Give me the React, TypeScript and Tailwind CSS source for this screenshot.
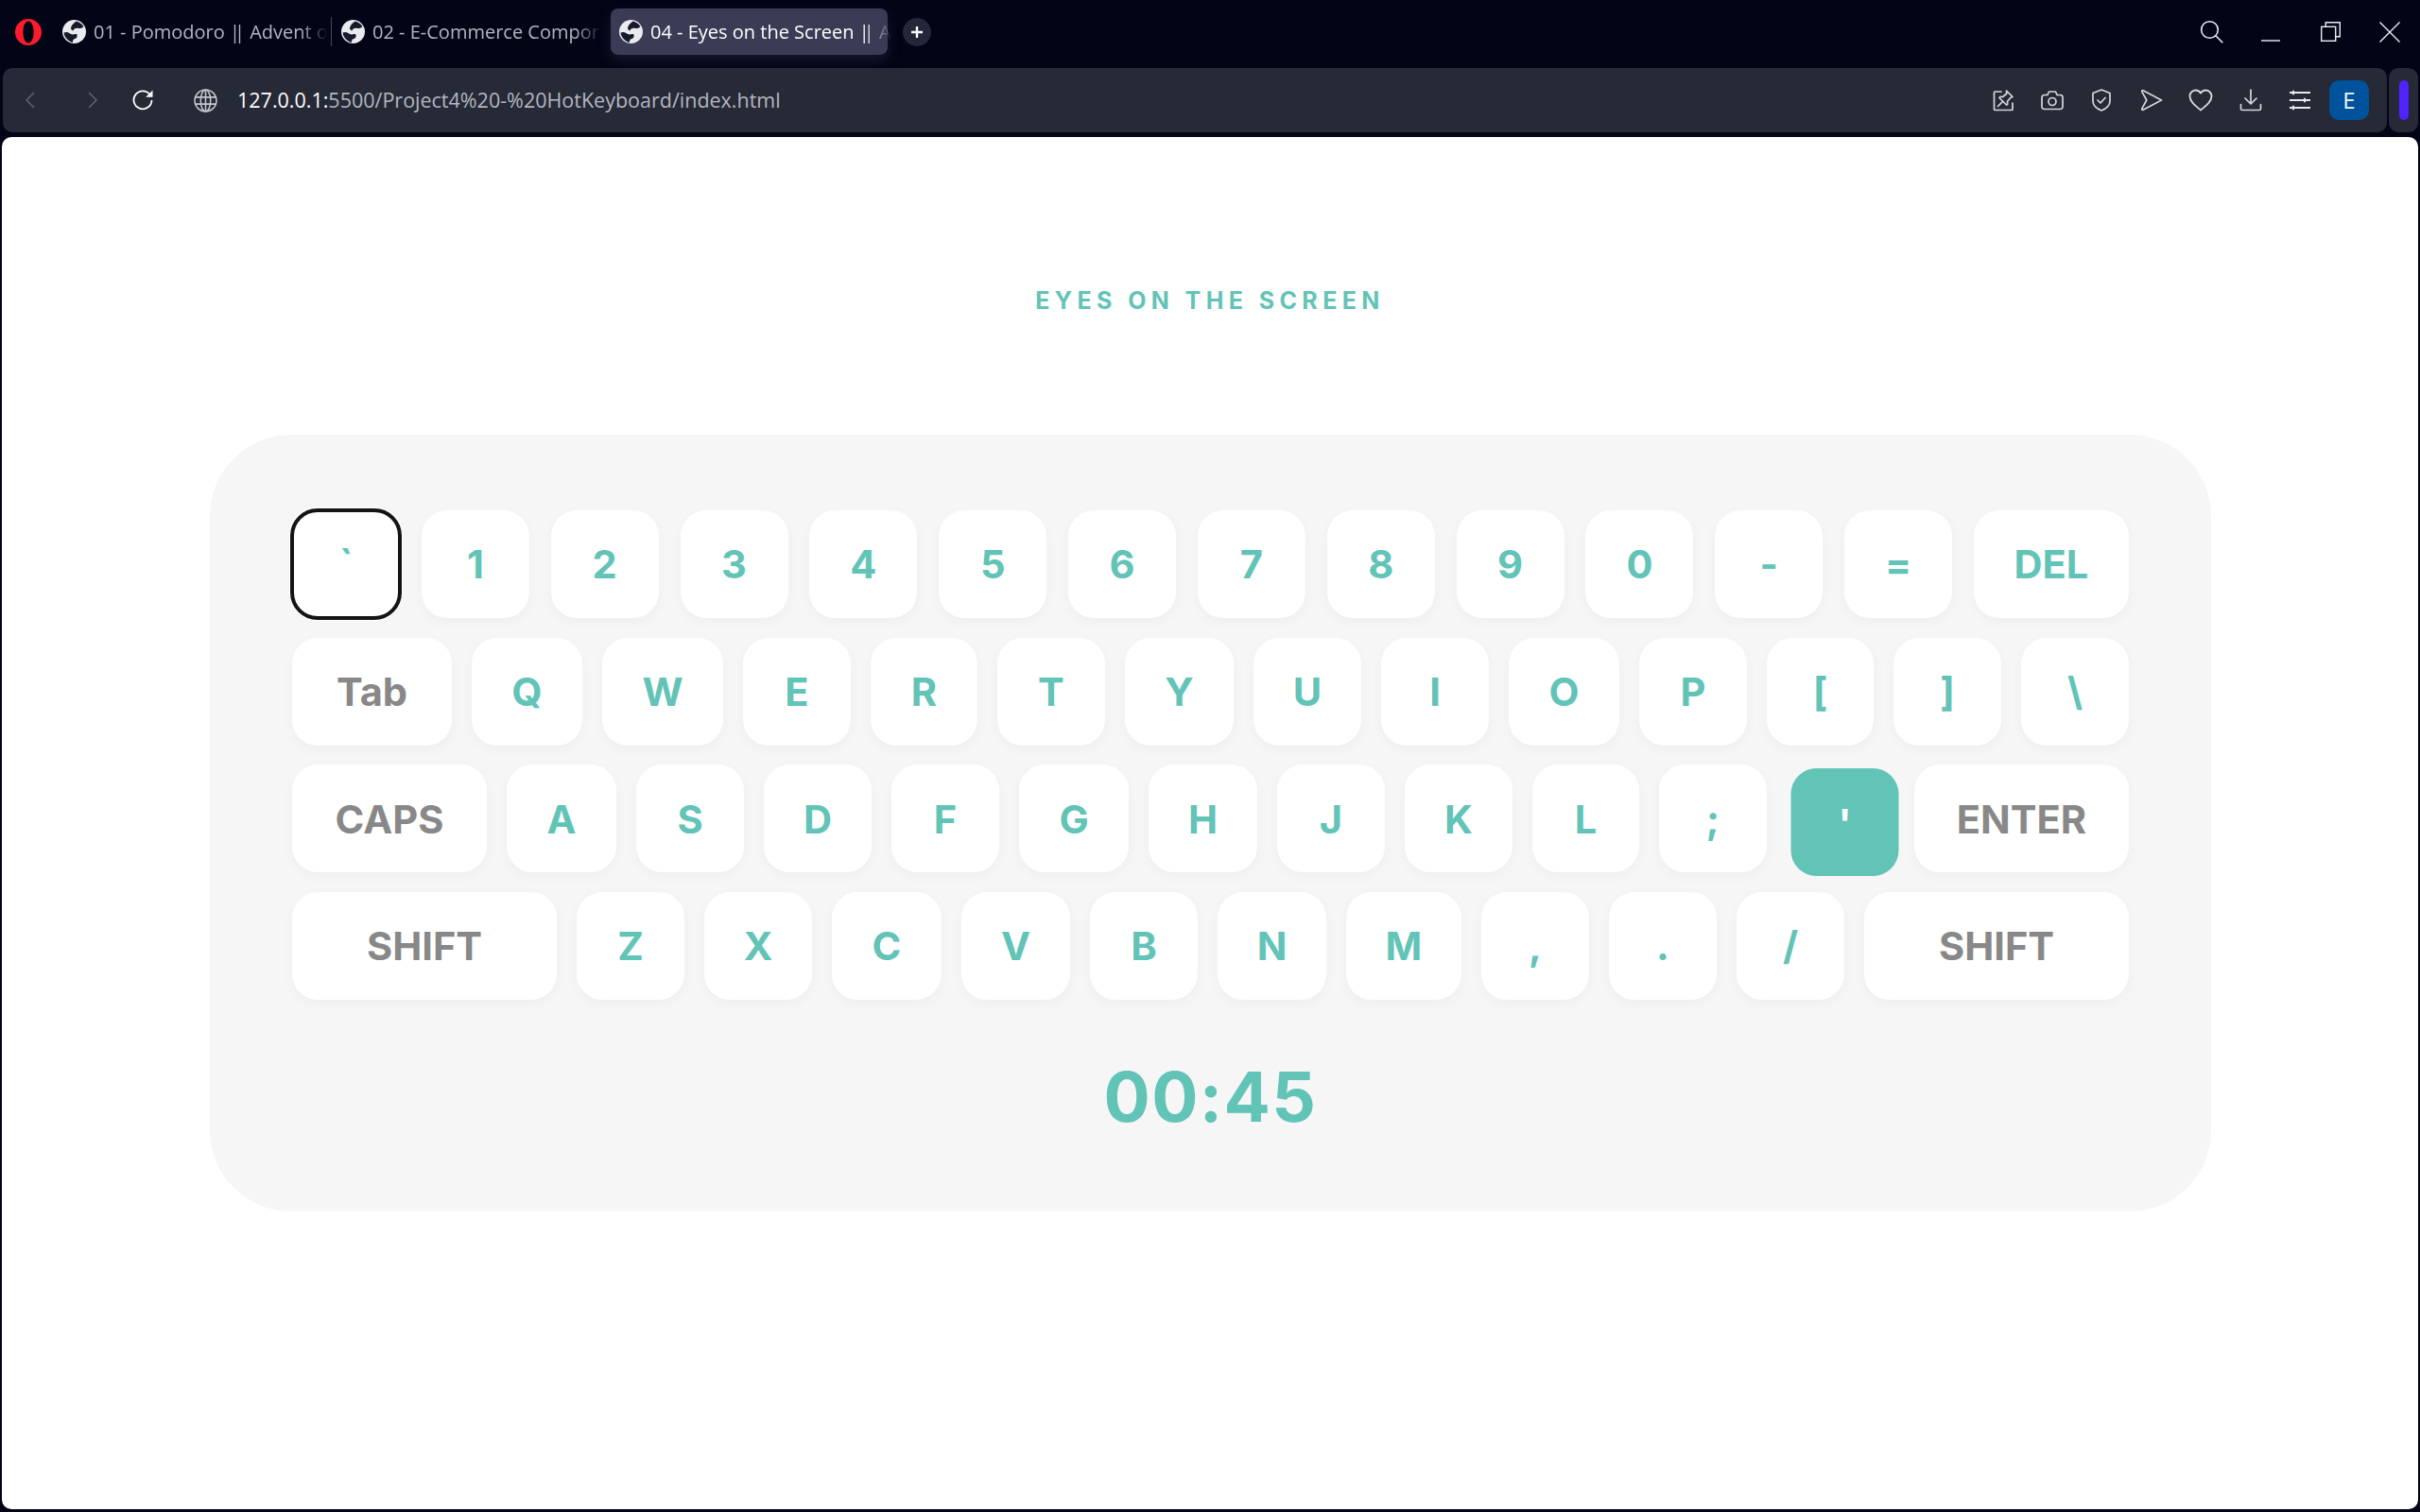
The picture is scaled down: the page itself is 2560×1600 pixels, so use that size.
import React from 'react';

type KeyDef = { label: string; width: string; muted?: boolean; focused?: boolean; pressed?: boolean };

const rows: KeyDef[][] = [
  [
    { label: '`', width: 'w-[114px]', focused: true },
    { label: '1', width: 'w-[114px]' },
    { label: '2', width: 'w-[114px]' },
    { label: '3', width: 'w-[114px]' },
    { label: '4', width: 'w-[114px]' },
    { label: '5', width: 'w-[114px]' },
    { label: '6', width: 'w-[114px]' },
    { label: '7', width: 'w-[114px]' },
    { label: '8', width: 'w-[114px]' },
    { label: '9', width: 'w-[114px]' },
    { label: '0', width: 'w-[114px]' },
    { label: '-', width: 'w-[114px]' },
    { label: '=', width: 'w-[114px]' },
    { label: 'DEL', width: 'w-[164px]' },
  ],
  [
    { label: 'Tab', width: 'w-[169px]', muted: true },
    { label: 'Q', width: 'w-[117px]' },
    { label: 'W', width: 'w-[128px]' },
    { label: 'E', width: 'w-[114px]' },
    { label: 'R', width: 'w-[113px]' },
    { label: 'T', width: 'w-[114px]' },
    { label: 'Y', width: 'w-[115px]' },
    { label: 'U', width: 'w-[114px]' },
    { label: 'I', width: 'w-[114px]' },
    { label: 'O', width: 'w-[117px]' },
    { label: 'P', width: 'w-[114px]' },
    { label: '[', width: 'w-[113px]' },
    { label: ']', width: 'w-[114px]' },
    { label: '\\', width: 'w-[114px]' },
  ],
  [
    { label: 'CAPS', width: 'w-[206px]', muted: true },
    { label: 'A', width: 'w-[116px]' },
    { label: 'S', width: 'w-[114px]' },
    { label: 'D', width: 'w-[114px]' },
    { label: 'F', width: 'w-[114px]' },
    { label: 'G', width: 'w-[116px]' },
    { label: 'H', width: 'w-[115px]' },
    { label: 'J', width: 'w-[114px]' },
    { label: 'K', width: 'w-[114px]' },
    { label: 'L', width: 'w-[113px]' },
    { label: ';', width: 'w-[114px]' },
    { label: "'", width: 'w-[114px]', pressed: true },
    { label: 'ENTER', width: 'w-[227px]', muted: true },
  ],
  [
    { label: 'SHIFT', width: 'w-[280px]', muted: true },
    { label: 'Z', width: 'w-[114px]' },
    { label: 'X', width: 'w-[114px]' },
    { label: 'C', width: 'w-[116px]' },
    { label: 'V', width: 'w-[115px]' },
    { label: 'B', width: 'w-[114px]' },
    { label: 'N', width: 'w-[115px]' },
    { label: 'M', width: 'w-[122px]' },
    { label: ',', width: 'w-[114px]' },
    { label: '.', width: 'w-[114px]' },
    { label: '/', width: 'w-[114px]' },
    { label: 'SHIFT', width: 'w-[280px]', muted: true },
  ],
];

function Key({ label, width, muted, focused, pressed }: KeyDef) {
  let look = 'bg-white text-[#62c3b7] shadow-[0_4px_14px_rgba(0,0,0,0.035)]';
  if (muted) look = 'bg-white text-[#888888] shadow-[0_4px_14px_rgba(0,0,0,0.035)]';
  if (pressed) look = 'bg-[#62c3b7] text-white translate-x-[4.5px] translate-y-[4px]';
  if (focused) look = 'bg-white text-[#62c3b7] outline-4 outline-[#141414] -outline-offset-2 shadow-[0_0_0_3px_#ffffff]';
  return (
    <div className={`${width} h-[114px] shrink-0 flex items-center justify-center pt-[2px] rounded-[27px] text-[41.6px] font-bold leading-none ${look}`}>
      {label}
    </div>
  );
}

function OperaLogo() {
  return (
    <svg viewBox="0 0 28 28" className="w-[28px] h-[28px] shrink-0">
      <path
        fillRule="evenodd"
        fill="#ff1b2d"
        d="M14 0C6.3 0 0 6.3 0 14s6.3 14 14 14 14-6.300 14-14S21.700 0 14 0Zm0 2.500c-3.400 0-5.600 5.200-5.600 11.500S10.600 25.500 14 25.500 19.600 20.300 19.600 14 17.400 2.500 14 2.500Z"
      />
    </svg>
  );
}

function Favicon() {
  return (
    <svg viewBox="0 0 24 24" className="w-[25px] h-[25px] shrink-0">
      <circle cx="12" cy="12" r="12" fill="#e9ebef" />
      <path fill="#171a2a" d="M14 1.500c3 .5 6 2.500 7.500 5.500-1.500 1.500-3.500 2-5.500 1.500-2.500-.6-4.500.5-5 2.500-2-.5-3-2-2-4 1-2.300 3-4 5-5.500Z" />
      <path fill="#171a2a" d="M1.500 13c2-1 4-.8 5.500.5 1.300 1.200 3 1.700 5 1.200 2-.5 3-.2 3 1.300 0 2-1.500 3-3 3.500-1 .4-1.500 1.500-1.500 3.500-4.500-1-8.500-5-9-10Z" />
    </svg>
  );
}

function Tab({ title, rest, active }: { title: string; rest?: string; active?: boolean }) {
  return (
    <div className={`w-[293px] h-[49px] flex items-center gap-[8px] pl-[9px] pr-[8px] rounded-[8px] ${active ? 'bg-[#3a3c55] text-white shadow-[0_6px_14px_rgba(60,64,90,0.35)]' : 'text-[#b4b6be]'}`}>
      <Favicon />
      <span className="flex-1 whitespace-nowrap text-[20px] [mask-image:linear-gradient(to_right,black_88%,transparent)]">
        {title}
        {rest && (
          <>
            <span className="tracking-[-6px] mr-[6px]">||</span> {rest}
          </>
        )}
      </span>
    </div>
  );
}

const iconClass = 'w-[24px] h-[24px] shrink-0 fill-none stroke-[#d6d7dd] stroke-[1.7]';

function ToolbarIcons() {
  return (
    <div className="ml-auto flex items-center gap-[28.4px] pr-[19px]">
      {/* pin to speed dial */}
      <svg viewBox="0 0 24 24" className={iconClass} strokeLinejoin="round" strokeLinecap="round">
        <path d="M10 3H3.500a1 1 0 0 0-1 1v17.500a1 1 0 0 0 1 1H21a1 1 0 0 0 1-1V15" />
        <path d="M15.500 2 22 8.500l-2 .8-3.500 4 .2 2.700-1.200 1-7.500-7.500 1-1.200 2.700.2 4-3.500Z" />
        <path d="M11.500 13.500 6.500 18.500" />
      </svg>
      {/* snapshot */}
      <svg viewBox="0 0 24 24" className={iconClass} strokeLinejoin="round">
        <path d="M3.500 6.500H7L8.500 3h7L17 6.500h3.500a2.500 2.500 0 0 1 2.500 2.500v10a2.500 2.500 0 0 1-2.500 2.500h-17A2.500 2.500 0 0 1 1 19V9a2.500 2.500 0 0 1 2.500-2.500Z" />
        <circle cx="12" cy="13.500" r="4" />
      </svg>
      {/* vpn shield */}
      <svg viewBox="0 0 24 24" className={iconClass} strokeLinejoin="round" strokeLinecap="round">
        <path d="M12 1 3 4.500V13c0 4.500 4 8 9 10 5-2 9-5.500 9-10V4.500L12 1Z" />
        <path d="m8 12 3 3 5-5.500" />
      </svg>
      {/* flow / send */}
      <svg viewBox="0 0 24 24" className={iconClass} strokeLinejoin="round">
        <path d="M3.200 1.800 22.500 12 3.200 22.200c-1 .4-1.700-.3-1.300-1.300L6.800 12 1.900 3.100c-.4-1 .3-1.700 1.300-1.300Z" />
      </svg>
      {/* bookmarks */}
      <svg viewBox="0 0 24 24" className={`${iconClass} scale-110`} strokeLinejoin="round">
        <path d="M12 21.500C7 17.500 1.500 13.500 1.500 8A5.800 5.800 0 0 1 7.300 2.500c2 0 3.700 1 4.700 2.800 1-1.800 2.700-2.800 4.700-2.800A5.800 5.800 0 0 1 22.500 8c0 5.500-5.500 9.500-10.500 13.500Z" />
      </svg>
      {/* downloads */}
      <svg viewBox="0 0 24 24" className={iconClass} strokeLinecap="round" strokeLinejoin="round">
        <path d="M12 1v14.500M6 10l6 6 6-6" />
        <path d="M1.500 16.500V21a1.500 1.500 0 0 0 1.500 1.500h18a1.500 1.500 0 0 0 1.500-1.500v-4.500" />
      </svg>
      {/* easy setup */}
      <svg viewBox="0 0 24 24" className={`${iconClass} stroke-[#e8e9ee] stroke-[2]`}>
        <path d="M1 4h22M1 12h22M1 20h22M5 1.800v4.400M17 9.800v4.400M5 17.800v4.400" />
      </svg>
      <div className="w-[42px] h-[42px] -ml-[9.400px] shrink-0 flex items-center justify-center rounded-[10px] bg-[#00529b] text-[#f2f5f9] text-[24px] font-['Open_Sans',sans-serif]">
        E
      </div>
    </div>
  );
}

function BrowserChrome() {
  return (
    <>
      {/* Tab strip */}
      <div className="h-[72px] shrink-0 flex items-center pl-[16px] pb-[5px] font-['Open_Sans',sans-serif]">
        <OperaLogo />
        <div className="ml-[13px] flex items-center">
          <Tab title="01 - Pomodoro " rest="Advent o" />
          <div className="w-[1px] h-[31px] bg-[#44475a] mr-[1px]" />
          <Tab title="02 - E-Commerce Compor" />
          <div className="w-[1px]" />
          <Tab title="04 - Eyes on the Screen " rest="A" active />
        </div>
        <div className="ml-[16px] w-[30px] h-[30px] rounded-full bg-[#24263a] flex items-center justify-center">
          <svg viewBox="0 0 14 14" className="w-[14px] h-[14px] stroke-white stroke-[2.4] fill-none">
            <path d="M7 1v12M1 7h12" />
          </svg>
        </div>
        <div className="ml-auto flex items-center pr-[21px]">
          <svg viewBox="0 0 25 25" className="w-[25px] h-[25px] fill-none stroke-[#eceef2] stroke-[1.6]">
            <circle cx="10.500" cy="10.500" r="8.800" />
            <path d="m16.800 16.800 7.500 7.500" />
          </svg>
          <svg viewBox="0 0 20 20" className="ml-[40px] w-[20px] h-[20px] fill-none stroke-[#eceef2] stroke-[1.4]">
            <path d="M0 19h20" />
          </svg>
          <svg viewBox="0 0 21 21" className="ml-[43px] w-[21px] h-[21px] fill-none stroke-[#eceef2] stroke-[1.4]">
            <rect x="0.700" y="5.300" width="15" height="15" />
            <path d="M5.300 5V.7h15v15H16" />
          </svg>
          <svg viewBox="0 0 22 22" className="ml-[41px] w-[22px] h-[22px] fill-none stroke-[#eceef2] stroke-[1.4]">
            <path d="m.5.5 21 21M21.500.5l-21 21" />
          </svg>
        </div>
      </div>

      {/* Address bar */}
      <div className="h-[68px] shrink-0 flex gap-[2px] pl-[3px] pr-[2px]">
        <div className="flex-1 flex items-center rounded-[10px] bg-[#262936]">
          <svg viewBox="0 0 10 18" className="ml-[24px] w-[10px] h-[18px] fill-none stroke-[#62656f] stroke-[1.5]">
            <path d="M9 1 1 9l8 8" />
          </svg>
          <svg viewBox="0 0 10 18" className="ml-[56px] w-[10px] h-[18px] fill-none stroke-[#62656f] stroke-[1.5]">
            <path d="m1 1 8 8-8 8" />
          </svg>
          <svg viewBox="0 0 22 22" className="ml-[37px] w-[22px] h-[22px] fill-none stroke-white stroke-[1.8]">
            <path d="M18.500 5A9.500 9.500 0 1 0 20.500 11" />
            <path fill="white" stroke="none" d="M21.500 .5v7.300h-7.300Z" />
          </svg>
          <svg viewBox="0 0 24 24" className="ml-[43px] w-[25px] h-[25px] fill-none stroke-[#c4c6cd] stroke-[1.5]">
            <circle cx="12" cy="12" r="11" />
            <ellipse cx="12" cy="12" rx="5" ry="11" />
            <path d="M12 1v22M1.500 8.500h21M1.500 15.500h21" />
          </svg>
          <div className="ml-[21px] whitespace-nowrap text-[21.500px] text-[#b3b6c1] font-['Open_Sans',sans-serif]">
            <span className="text-white">127.0.0.1:</span>5500/Project4%20-%20HotKeyboard/index.html
          </div>
          <ToolbarIcons />
        </div>
        <div className="w-[31px] flex items-center justify-center rounded-[10px] bg-[#262936]">
          <div className="w-[10px] h-[42px] rounded-full bg-[#5023ff]" />
        </div>
      </div>
    </>
  );
}

export default function App() {
  return (
    <div className="h-screen flex flex-col overflow-hidden bg-[#020516] font-['Inter',sans-serif]">
      <BrowserChrome />

      <main className="mt-[5px] mx-[2px] mb-[3px] flex-1 flex flex-col items-center rounded-[10px] bg-white">
        <h1 className="pt-[161px] text-[25px] leading-none font-bold tracking-[5.4px] text-[#62c3b7]">
          EYES ON THE SCREEN
        </h1>

        <section className="mt-[129px] ml-[1px] w-[2117px] pt-[80px] pl-[87px] pr-[87px] pb-[84.500px] rounded-[86px] bg-[#f6f6f6]">
          <div className="flex flex-col gap-[20.700px]">
            {rows.map((row, i) => (
              <div key={i} className="flex justify-between">
                {row.map((k, j) => (
                  <Key key={j} {...k} />
                ))}
              </div>
            ))}
          </div>
          <div className="mt-[66px] text-center text-[73px] leading-none font-bold tracking-[1.4px] text-[#62c3b7]">
            00:45
          </div>
        </section>
      </main>
    </div>
  );
}
